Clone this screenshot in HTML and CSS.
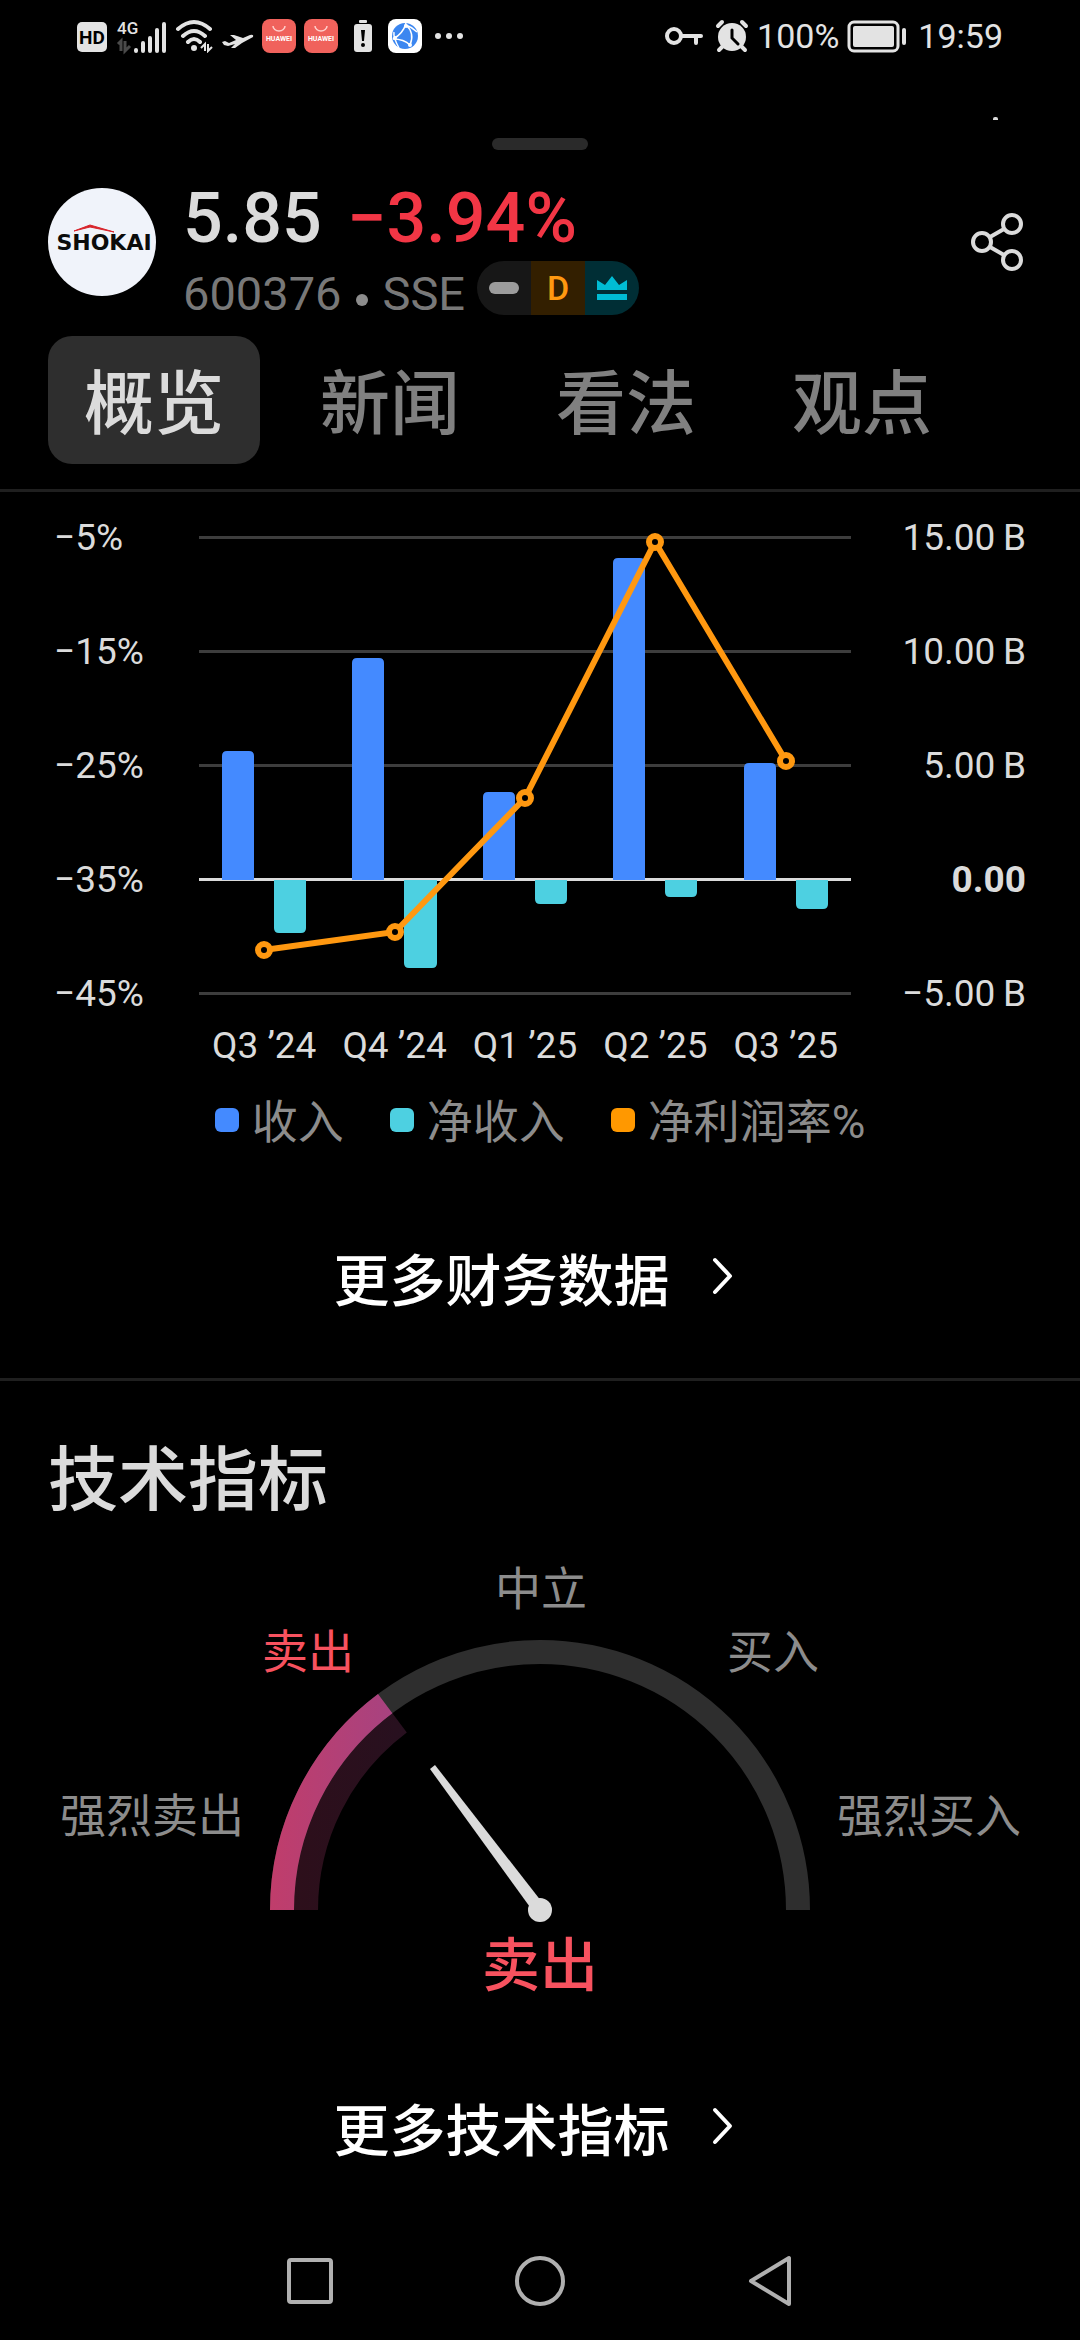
FILE: index.html
```html
<!DOCTYPE html>
<html lang="zh-CN">

<head>
    <meta charset="UTF-8">
    <meta name="viewport" content="width=device-width, initial-scale=1.0">
    <title>600376 概览</title>
    <link rel="stylesheet" href="styles.css">
</head>

<body>
    <!-- 系统状态栏 -->
    <div class="statusbar">
        <svg width="32" height="34" viewBox="0 0 32 34">
            <rect x="1" y="3" width="30" height="30" rx="5" fill="#e3e3e3" />
            <text class="hd" x="16" y="25" text-anchor="middle">HD</text>
        </svg>
        <svg width="51" height="38" viewBox="0 -2 51 38">
            <text class="net" x="1" y="15">4G</text>
            <path d="M2 25l3-3v10M9 22v10l5-5" fill="none" stroke="#4a4a4a" stroke-width="3" />
            <path d="M20 31v1M27 24v8M34 19v13M41 11v21M48 5v27" fill="none" stroke="#e3e3e3" stroke-width="4" stroke-linecap="round" />
        </svg>
        <svg width="39" height="34" viewBox="0 0 39 34">
            <path d="M3 10Q19 -4 35 10M8 17Q19 7 30 17M13 23Q19 17 25 23" fill="none" stroke="#e3e3e3" stroke-width="4" stroke-linecap="round" />
            <circle cx="19" cy="29" r="3" fill="#e3e3e3" />
            <path d="M26 29l4-4v7M33 25v7l4-4" fill="none" stroke="#e3e3e3" stroke-width="2" />
        </svg>
        <svg width="32" height="34" viewBox="0 0 32 34">
            <path d="M0 23l3-1 4 2 7-3-6-5 4 0 9 3 7-3q4-1 3 2L20 24l-7 5-4 0 4-4-7 2-4-1z" fill="#e3e3e3" />
        </svg>
        <svg width="34" height="34" viewBox="0 0 34 34">
            <rect width="34" height="34" rx="8" fill="#f0625c" />
            <path d="M11 7a6 5 0 0 0 12 0" fill="none" stroke="#ffd0cc" stroke-width="1.5" />
            <text class="brand" x="17" y="22" text-anchor="middle">HUAWEI</text>
        </svg>
        <svg width="34" height="34" viewBox="0 0 34 34">
            <rect width="34" height="34" rx="8" fill="#f0625c" />
            <path d="M11 7a6 5 0 0 0 12 0" fill="none" stroke="#ffd0cc" stroke-width="1.5" />
            <text class="brand" x="17" y="22" text-anchor="middle">HUAWEI</text>
        </svg>
        <svg width="34" height="34" viewBox="0 0 34 34">
            <rect x="13" y="1" width="8" height="3" rx="1" fill="#e3e3e3" />
            <rect x="8" y="5" width="18" height="28" rx="3" fill="#e3e3e3" />
            <path d="M15 11h4l-1 11h-2z" fill="#000" />
            <circle cx="17" cy="26" r="2" fill="#000" />
        </svg>
        <svg width="34" height="34" viewBox="0 0 34 34">
            <rect width="34" height="34" rx="8" fill="#fff" />
            <circle cx="17" cy="17" r="13" fill="#3b86f0" />
            <path d="M18 4Q15 15 5 20M5 20Q16 20 22 26M6 13Q5 18 11 29M18 6q9 8 4 20M18 6q6 2 11 7" fill="none" stroke="#fff" stroke-width="1.5" />
            <circle cx="18" cy="7" r="2" fill="#fff" />
            <circle cx="7" cy="19" r="2" fill="#fff" />
            <circle cx="22" cy="26" r="2" fill="#fff" />
        </svg>
        <svg width="40" height="34" viewBox="0 0 40 34">
            <g fill="#e3e3e3">
                <circle cx="8" cy="17" r="3" />
                <circle cx="19" cy="17" r="3" />
                <circle cx="30" cy="17" r="3" />
            </g>
        </svg>

        <div class="status-right">
            <svg width="38" height="34" viewBox="0 0 38 34">
                <g fill="none" stroke="#e3e3e3" stroke-width="4">
                    <circle cx="9" cy="17" r="7" />
                    <path d="M16 17h20M31 17v7" stroke-linecap="round" />
                </g>
            </svg>
            <svg class="alarm" width="34" height="34" viewBox="0 0 34 34">
                <circle cx="17" cy="18" r="14" fill="#e3e3e3" />
                <path d="M3 7l4-4M31 7l-4-4M7 28l-3 3M27 28l3 3" stroke="#e3e3e3" stroke-width="4" stroke-linecap="round" />
                <path d="M17 11v8l6 6" fill="none" stroke="#000" stroke-width="3" stroke-linecap="round" />
            </svg>
            <span>100%</span>
            <svg width="60" height="34" viewBox="0 0 60 34">
                <rect x="2" y="3" width="49" height="29" rx="5" fill="none" stroke="#e3e3e3" stroke-width="3" />
                <rect x="6" y="7" width="41" height="21" rx="2" fill="#e3e3e3" />
                <rect x="55" y="9" width="4" height="17" rx="2" fill="#e3e3e3" />
            </svg>
            <span class="clock">19:59</span>
        </div>
    </div>
    <i class="speck"></i>

    <div class="handle"></div>

    <header class="quote">
        <svg class="logo" viewBox="0 0 108 108">
            <circle cx="54" cy="54" r="54" fill="#f0f3fa" />
            <path d="M26 43L42 37L66 44L42 39z" fill="#d8232a" stroke="#d8232a" />
            <text x="56" y="62" text-anchor="middle">SHOKAI</text>
        </svg>
        <div class="info">
            <div class="price">5.85 <span class="change">−3.94%</span></div>
            <div class="sub">
                <span class="symbol">600376<i class="dot"></i>SSE</span>
                <div class="badges">
                    <span class="closed"><i></i></span>
                    <span class="delay">D</span>
                    <span class="crown">
                        <svg width="30" height="24" viewBox="0 0 30 24">
                            <path d="M0 4l8 5 7-9 7 9 8-5v10H0zM0 18h30v6H0z" fill="#00bcd4" />
                        </svg>
                    </span>
                </div>
            </div>
        </div>
        <button class="share" aria-label="分享">
            <svg width="56" height="60" viewBox="0 0 56 60">
                <g fill="none" stroke="#dbdbdb" stroke-width="4">
                    <circle cx="42" cy="12" r="9" />
                    <circle cx="12" cy="30" r="9" />
                    <circle cx="42" cy="48" r="9" />
                    <path d="M20 25l14-8M20 35l14 8" />
                </g>
            </svg>
        </button>
    </header>

    <nav class="tabs">
        <button class="active">概览</button>
        <button>新闻</button>
        <button>看法</button>
        <button>观点</button>
    </nav>

    <!-- 财务数据 -->
    <section class="finance">
        <div class="chart">
            <div class="axis">
                <span>−5%</span>
                <span>−15%</span>
                <span>−25%</span>
                <span>−35%</span>
                <span>−45%</span>
            </div>
            <svg class="plot" viewBox="0 0 652 499">
                <path class="grid" d="M0 21.5H652M0 135.5H652M0 249.5H652M0 477.5H652" />
                <path class="zero" d="M0 363.5H652" />
                <g fill="#448aff">
                    <path d="M23 364V240q0-5 5-5h22q5 0 5 5V364z" />
                    <path d="M153 364V147q0-5 5-5h22q5 0 5 5V364z" />
                    <path d="M284 364V281q0-5 5-5h22q5 0 5 5V364z" />
                    <path d="M414 364V47q0-5 5-5h22q5 0 5 5V364z" />
                    <path d="M545 364V252q0-5 5-5h22q5 0 5 5V364z" />
                </g>
                <g fill="#4dd0e1">
                    <path d="M75 364V412q0 5 5 5h22q5 0 5-5V364z" />
                    <path d="M205 364V447q0 5 5 5h23q5 0 5-5V364z" />
                    <path d="M336 364V383q0 5 5 5h22q5 0 5-5V364z" />
                    <path d="M466 364V376q0 5 5 5h22q5 0 5-5V364z" />
                    <path d="M597 364V388q0 5 5 5h22q5 0 5-5V364z" />
                </g>
                <g stroke="#ff9810" stroke-width="6">
                    <polyline fill="none" points="65,434 196,416 326,282 456,26 587,245" />
                    <g fill="#000">
                        <circle cx="65" cy="434" r="6" />
                        <circle cx="196" cy="416" r="6" />
                        <circle cx="326" cy="282" r="6" />
                        <circle cx="456" cy="26" r="6" />
                        <circle cx="587" cy="245" r="6" />
                    </g>
                </g>
            </svg>
            <div class="axis right">
                <span>15.00&#8201;B</span>
                <span>10.00&#8201;B</span>
                <span>5.00&#8201;B</span>
                <span class="bold">0.00</span>
                <span>−5.00&#8201;B</span>
            </div>
            <div class="quarters">
                <span>Q3 ’24</span>
                <span>Q4 ’24</span>
                <span>Q1 ’25</span>
                <span>Q2 ’25</span>
                <span>Q3 ’25</span>
            </div>
        </div>
        <ul class="legend">
            <li class="income"><span>收入</span></li>
            <li class="net-income"><span>净收入</span></li>
            <li class="margin"><span>净利润率%</span></li>
        </ul>
        <button class="more">更多财务数据
            <svg width="22" height="38" viewBox="0 0 22 38">
                <path d="M3 3l15 16L3 35" />
            </svg>
        </button>
    </section>

    <!-- 技术指标 -->
    <section class="technical">
        <h2>技术指标</h2>
        <svg class="gauge" viewBox="0 0 1080 450">
            <defs>
                <linearGradient id="sell" gradientUnits="userSpaceOnUse" x1="270" y1="0" x2="405" y2="0">
                    <stop offset="0" stop-color="#c03d6b" />
                    <stop offset="1" stop-color="#a54382" />
                </linearGradient>
            </defs>
            <g fill="none" stroke-width="24">
                <path d="M282 360A258 258 0 0 1 798 360" stroke="#2e2e2e" />
                <path d="M306 360A234 234 0 0 1 399.6 172.8" stroke="url(#sell)" opacity="0.24" />
                <path d="M282 360A258 258 0 0 1 385.2 153.6" stroke="url(#sell)" />
            </g>
            <path d="M430 219L435 215L545 356L535 364z" fill="#dbdbdb" />
            <circle cx="540" cy="360" r="12" fill="#dbdbdb" />
            <g class="labels" text-anchor="middle">
                <text x="541" y="55">中立</text>
                <text class="on" x="308" y="118">卖出</text>
                <text x="773" y="118">买入</text>
                <text x="152" y="282">强烈卖出</text>
                <text x="929" y="282">强烈买入</text>
                <text class="verdict" x="540" y="436">卖出</text>
            </g>
        </svg>
        <button class="more">更多技术指标
            <svg width="22" height="38" viewBox="0 0 22 38">
                <path d="M3 3l15 16L3 35" />
            </svg>
        </button>
    </section>

    <!-- 系统导航键 -->
    <div class="sysnav">
        <button aria-label="最近任务">
            <svg width="52" height="52" viewBox="0 0 52 52">
                <rect x="5" y="5" width="42" height="42" rx="2" />
            </svg>
        </button>
        <button aria-label="主屏幕">
            <svg width="52" height="52" viewBox="0 0 52 52">
                <circle cx="26" cy="26" r="23" />
            </svg>
        </button>
        <button aria-label="返回">
            <svg width="52" height="52" viewBox="0 0 52 52">
                <path d="M45 3v46L7 26z" />
            </svg>
        </button>
    </div>
</body>

</html>
```
FILE: styles.css
```css
* {
    padding: 0;
    margin: 0;
    box-sizing: border-box;
}

body {
    background: #000;
    color: #dbdbdb;
    font-family: Roboto, "Noto Sans CJK SC", sans-serif;
}

svg {
    display: block;
    flex-shrink: 0;
}

button {
    background: none;
    border: 0;
    color: inherit;
    font-family: inherit;
}

/* 状态栏 */
.statusbar {
    display: flex;
    align-items: center;
    gap: 8px;
    height: 72px;
    padding: 0 77px 0 76px;
    color: #e3e3e3;
    font-size: 34px;
}

.statusbar .hd {
    font-size: 19px;
    font-weight: 700;
    fill: #000;
}

.statusbar .net {
    font-size: 17px;
    font-weight: 500;
    fill: #e3e3e3;
}

.statusbar .brand {
    font-size: 7px;
    font-weight: 700;
    fill: #fff;
}

.status-right {
    display: flex;
    align-items: center;
    gap: 8px;
    margin-left: auto;
}

.status-right .alarm {
    margin-left: 4px;
}

.status-right .clock {
    margin-left: 3px;
}

.speck {
    position: absolute;
    top: 117px;
    right: 82px;
    width: 5px;
    height: 3px;
    border-radius: 2px 2px 0 0;
    background: #dbdbdb;
}

.handle {
    width: 96px;
    height: 12px;
    margin: 66px auto 38px;
    border-radius: 6px;
    background: #2a2a2a;
}

/* 行情头部 */
.quote {
    display: flex;
    align-items: flex-start;
    padding: 0 54px 0 48px;
}

.logo {
    width: 108px;
    height: 108px;
}

.logo text {
    font-family: "DejaVu Sans", sans-serif;
    font-size: 22px;
    font-weight: 700;
    fill: #0b0b0b;
}

.info {
    flex: 1;
    margin-left: 27px;
}

.price {
    font-size: 70px;
    font-weight: 500;
    line-height: 60px;
    margin-bottom: 13px;
}

.price .change {
    margin-left: 8px;
    color: #f23645;
}

.sub {
    display: flex;
    align-items: flex-start;
    gap: 12px;
}

.symbol {
    display: flex;
    align-items: center;
    color: #787878;
    font-size: 47px;
    line-height: 66px;
}

.symbol .dot {
    width: 12px;
    height: 12px;
    margin: 12px 15px 0 14px;
    border-radius: 50%;
    background: #8c8c8c;
}

.badges {
    display: flex;
    border-radius: 27px;
    overflow: hidden;
}

.badges span {
    display: flex;
    align-items: center;
    justify-content: center;
    width: 54px;
    height: 54px;
}

.badges .closed {
    background: #171717;
}

.badges .closed i {
    width: 30px;
    height: 12px;
    border-radius: 6px;
    background: #9c9c9c;
}

.badges .delay {
    background: #331f00;
    color: #ff9810;
    font-size: 34px;
    font-weight: 500;
}

.badges .crown {
    background: #002e35;
}

.share {
    margin-top: 24px;
}

/* 标签页 */
.tabs {
    display: flex;
    gap: 24px;
    padding: 9px 48px 25px;
    border-bottom: 3px solid #1f1f1f;
}

.tabs button {
    height: 128px;
    padding: 10px 36px 0;
    border-radius: 24px;
    color: #808080;
    font-size: 70px;
    font-weight: 500;
    line-height: 118px;
    white-space: nowrap;
}

.tabs .active {
    background: #2e2e2e;
    color: #dbdbdb;
}

/* 图表 */
.finance {
    padding: 24px 0 50px;
    border-bottom: 3px solid #1f1f1f;
}

.chart {
    display: grid;
    grid-template-columns: 145px 1fr 175px;
    row-gap: 9px;
    padding: 0 54px;
    font-size: 37px;
    line-height: 43px;
}

.axis {
    display: flex;
    flex-direction: column;
    justify-content: space-between;
}

.axis.right {
    text-align: right;
}

.axis .bold {
    font-weight: 700;
}

.plot {
    width: 100%;
}

.plot .grid {
    stroke: #3d3d3d;
    stroke-width: 3;
}

.plot .zero {
    stroke: #dbdbdb;
    stroke-width: 3;
}

.quarters {
    grid-column: 2;
    display: grid;
    grid-template-columns: repeat(5, 1fr);
    text-align: center;
    white-space: nowrap;
}

.legend {
    display: flex;
    justify-content: center;
    gap: 46px;
    margin-top: 23px;
    list-style: none;
    color: #8c8c8c;
    font-size: 46px;
    line-height: 60px;
}

.legend li {
    display: flex;
    align-items: center;
    gap: 13px;
}

.legend span {
    padding-top: 4px;
    line-height: 56px;
}

.legend li::before {
    content: "";
    width: 24px;
    height: 24px;
    border-radius: 6px;
}

.legend .income::before {
    background: #448aff;
}

.legend .net-income::before {
    background: #4dd0e1;
}

.legend .margin::before {
    background: #ff9800;
}

.more {
    display: flex;
    align-items: center;
    justify-content: center;
    gap: 42px;
    width: 100%;
    height: 100px;
    margin-top: 76px;
    margin-bottom: 2px;
    padding-right: 13px;
    color: #fff;
    font-size: 56px;
    font-weight: 500;
}

.more path {
    fill: none;
    stroke: #fff;
    stroke-width: 4;
    stroke-linecap: round;
    stroke-linejoin: round;
}

/* 仪表盘 */
.technical h2 {
    padding: 55px 48px 24px;
    font-size: 70px;
    font-weight: 500;
    line-height: 90px;
}

.gauge {
    width: 100%;
}

.gauge .labels {
    fill: #8c8c8c;
    font-size: 46px;
}

.gauge .on {
    fill: #f7525f;
}

.gauge .verdict {
    fill: #f7525f;
    font-size: 58px;
    font-weight: 500;
}

/* 导航键 */
.sysnav {
    display: flex;
    align-items: center;
    justify-content: center;
    gap: 130px;
    height: 114px;
    margin-top: 48px;
}

.sysnav button {
    display: flex;
    justify-content: center;
    width: 100px;
}

.sysnav svg {
    fill: none;
    stroke: #b0b0b0;
    stroke-width: 4;
    stroke-linejoin: round;
}
```
